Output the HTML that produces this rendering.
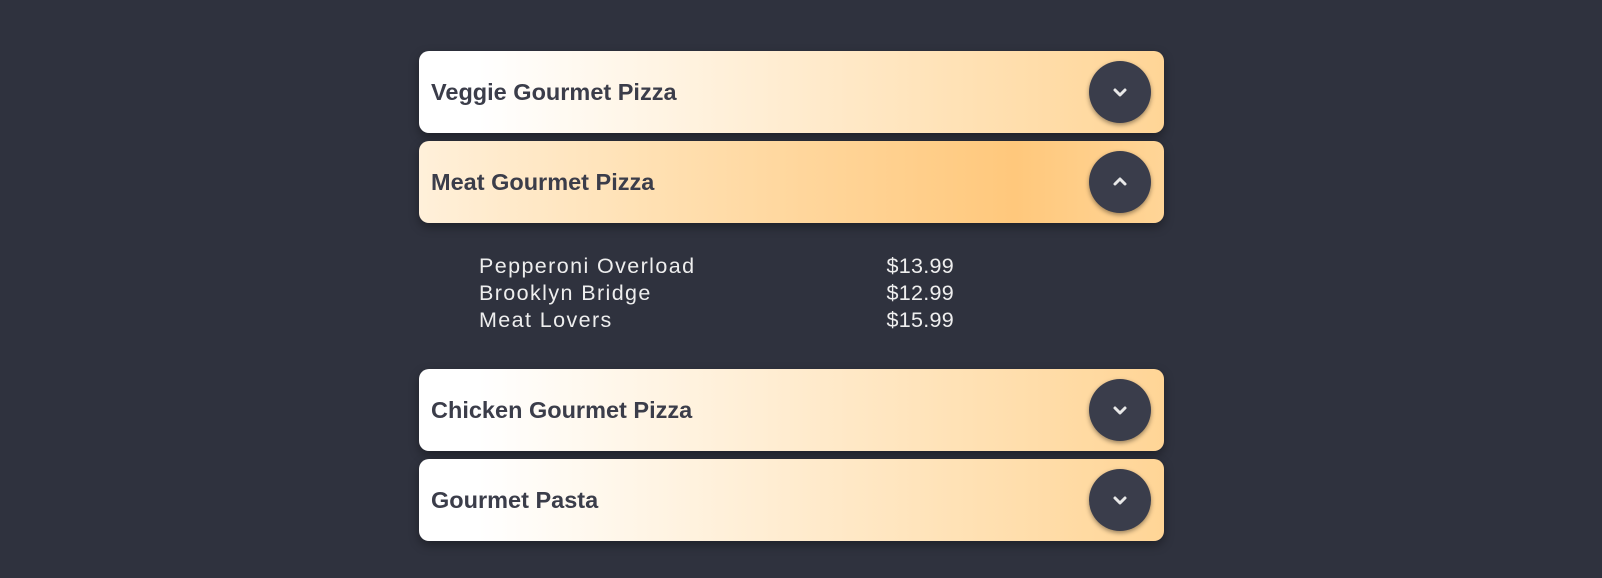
<!DOCTYPE html>
<html><head><style>
body{margin:0;width:1602px;height:578px;background:#2f323e;font-family:"Liberation Sans",sans-serif;overflow:hidden;position:relative}
.card{position:absolute;left:419px;width:745px;height:82px;border-radius:10px;background:linear-gradient(90deg,#fff 8%,#ffd596 100%);box-shadow:0 4px 10px rgba(0,0,0,.35)}
.card.open{background:linear-gradient(90deg,#fff0da 0%,#ffe1b4 30%,#ffc87c 80%,#ffd597 100%)}
.card span{position:absolute;left:12px;top:0;line-height:82px;font-weight:bold;font-size:23.5px;color:#3b3d4a}
.btn{position:absolute;right:13px;top:10px;width:62px;height:62px;border-radius:50%;background:#3a3d4b;box-shadow:0 2px 5px rgba(0,0,0,.4)}
.btn svg{position:absolute;left:21px;top:21px}
.items{position:absolute;left:479px;top:253px;color:#eee;font-size:21.5px;line-height:27px;letter-spacing:1.4px}
.items div{position:relative;width:475px}
.items b{font-weight:normal;position:absolute;right:0;letter-spacing:0.3px}
</style></head><body>
<div class="card" style="top:51px"><span>Veggie Gourmet Pizza</span><div class="btn"><svg width="20" height="20" viewBox="0 0 20 20"><path d="M5 8l5 5 5-5" fill="none" stroke="#e8e8e8" stroke-width="3" stroke-linecap="round" stroke-linejoin="round"/></svg></div></div>
<div class="card open" style="top:141px"><span>Meat Gourmet Pizza</span><div class="btn"><svg width="20" height="20" viewBox="0 0 20 20"><path d="M5 12l5-5 5 5" fill="none" stroke="#e8e8e8" stroke-width="3" stroke-linecap="round" stroke-linejoin="round"/></svg></div></div>
<div class="items">
<div>Pepperoni Overload<b>$13.99</b></div>
<div>Brooklyn Bridge<b>$12.99</b></div>
<div>Meat Lovers<b>$15.99</b></div>
</div>
<div class="card" style="top:369px"><span>Chicken Gourmet Pizza</span><div class="btn"><svg width="20" height="20" viewBox="0 0 20 20"><path d="M5 8l5 5 5-5" fill="none" stroke="#e8e8e8" stroke-width="3" stroke-linecap="round" stroke-linejoin="round"/></svg></div></div>
<div class="card" style="top:459px"><span>Gourmet Pasta</span><div class="btn"><svg width="20" height="20" viewBox="0 0 20 20"><path d="M5 8l5 5 5-5" fill="none" stroke="#e8e8e8" stroke-width="3" stroke-linecap="round" stroke-linejoin="round"/></svg></div></div>
</body></html>
